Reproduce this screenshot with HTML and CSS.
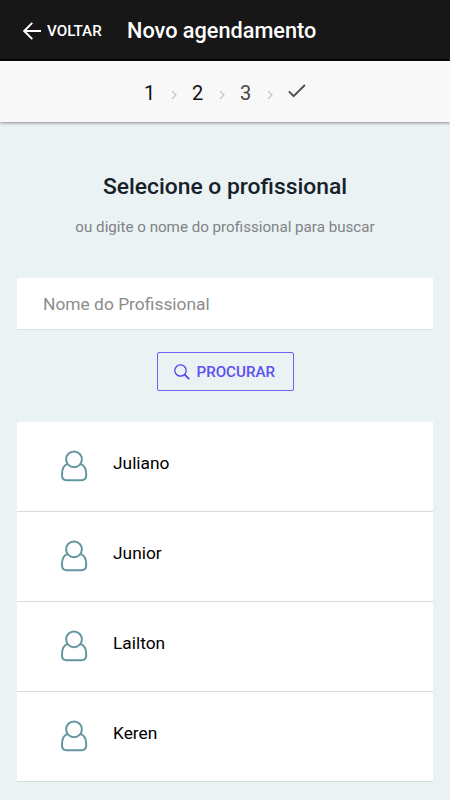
FILE: index.html
```html
<!DOCTYPE html>
<html lang="pt-BR">
<head>
<meta charset="utf-8">
<title>Novo agendamento</title>
<link rel="stylesheet" href="styles.css">
</head>
<body>
<svg class="defs" width="0" height="0" aria-hidden="true">
  <symbol id="chevron" viewBox="0 0 6 10"><path d="M1 1l4 4-4 4" fill="none" stroke="#c4c4c4" stroke-width="1.1"/></symbol>
  <symbol id="person" viewBox="0 0 28 32"><g fill="none" stroke="#64969f" stroke-width="2"><circle cx="14" cy="9.300" r="7.900"/><path d="M7.600 14.100C3.800 15 2 19.600 2 24.500v.8c0 3.400 1.600 4.900 4.600 4.900h14.800c3 0 4.800-1.500 4.800-4.900v-.8c0-4.900-1.900-9.500-5.800-10.400"/></g></symbol>
</svg>
<header class="topbar">
  <a class="back">
    <svg class="back-icon" viewBox="0 0 18 18"><path d="M9.300 .9L1.200 9l8.100 8.100M1.500 9H18" fill="none" stroke="#fff" stroke-width="1.900"/></svg>
    <span>VOLTAR</span>
  </a>
  <h1 class="title">Novo agendamento</h1>
</header>
<nav class="steps">
  <span class="step">1</span>
  <svg class="chevron"><use href="#chevron"/></svg>
  <span class="step current">2</span>
  <svg class="chevron"><use href="#chevron"/></svg>
  <span class="step next">3</span>
  <svg class="chevron"><use href="#chevron"/></svg>
  <svg class="check" viewBox="0 0 18 14"><path d="M.9 7.400l4.700 4.700L16.900 1" fill="none" stroke="#505050" stroke-width="2"/></svg>
</nav>
<main class="content">
  <h2 class="heading">Selecione o profissional</h2>
  <p class="hint">ou digite o nome do profissional para buscar</p>
  <input class="field" type="text" placeholder="Nome do Profissional">
  <button class="search">
    <svg class="search-icon" viewBox="0 0 16 16"><g fill="none" stroke="#4a3df5"><circle cx="6.500" cy="6.500" r="5.700" stroke-width="1.200"/><path d="M10.600 10.600l4.600 4.500" stroke-width="1.600"/></g></svg>
    <span>PROCURAR</span>
  </button>
  <ul class="list">
    <li class="row"><svg class="person"><use href="#person"/></svg><span class="name">Juliano</span></li>
    <li class="row"><svg class="person"><use href="#person"/></svg><span class="name">Junior</span></li>
    <li class="row"><svg class="person"><use href="#person"/></svg><span class="name">Lailton</span></li>
    <li class="row"><svg class="person"><use href="#person"/></svg><span class="name">Keren</span></li>
  </ul>
</main>
</body>
</html>
```
FILE: styles.css
```css
* { box-sizing: border-box; }
body {
  margin: 0;
  height: 800px;
  overflow: hidden;
  background: #eaf2f4;
  font-family: Roboto, sans-serif;
  color: #111;
}
.defs { display: block; height: 0; }
.topbar {
  display: flex;
  align-items: center;
  height: 61px;
  padding-left: 23px;
  background: #171717;
  border-bottom: 2px solid #080808;
  color: #fff;
}
.back {
  display: flex;
  align-items: center;
  width: 104px;
  gap: 6px;
  padding-top: 2px;
  font-size: 15.200px;
  font-weight: 500;
}
.back-icon { width: 18px; height: 18px; }
.title {
  margin: 2px 0 0;
  font-size: 21.700px;
  font-weight: 500;
  line-height: 28px;
}
.steps {
  display: flex;
  align-items: center;
  justify-content: center;
  height: 61px;
  padding: 3px 1px 0 0;
  background: #f8f8f8;
  box-shadow: 0 1px 3px rgba(0, 0, 0, .42);
}
.step {
  width: 12px;
  font-size: 20px;
  line-height: 24px;
  text-align: center;
}
.next { color: #444; }
.chevron {
  width: 6px;
  height: 10px;
  margin: 4px 15px 0;
}
.check { width: 18px; height: 14px; margin-top: -4px; }
.content {
  display: flex;
  flex-direction: column;
  align-items: center;
  padding: 51px 17px 0;
}
.heading {
  margin: 0;
  font-size: 22.850px;
  font-weight: 500;
  line-height: 28px;
  color: #16212a;
}
.hint {
  margin: 16px 0 0;
  font-size: 15.150px;
  line-height: 20px;
  color: #808384;
}
.field {
  width: 100%;
  height: 52px;
  margin-top: 41px;
  padding: 0 26px;
  border: 0;
  border-bottom: 1px solid #dfe2e2;
  background: #fff;
  font: 17.400px Roboto, sans-serif;
}
.field::placeholder { color: #8c8c8c; }
.search {
  display: flex;
  align-items: center;
  gap: 7px;
  width: 137px;
  height: 39px;
  margin-top: 22px;
  padding: 0 0 0 16px;
  border: 1px solid #6b63f6;
  border-radius: 2px;
  background: transparent;
  font: 500 15.150px Roboto, sans-serif;
  color: #5a4ff2;
}
.search-icon { width: 16px; height: 16px; }
.list {
  width: 100%;
  margin: 31px 0 0;
  padding: 0;
  list-style: none;
}
.row {
  display: flex;
  height: 90.100px;
  padding: 28px 0 0 43px;
  border-bottom: 1px solid #d8dbdc;
  background: #fff;
}
.person { width: 28px; height: 32px; }
.name {
  margin: 1px 0 0 25px;
  font-size: 17.350px;
  line-height: 24px;
  color: #000;
}
```
